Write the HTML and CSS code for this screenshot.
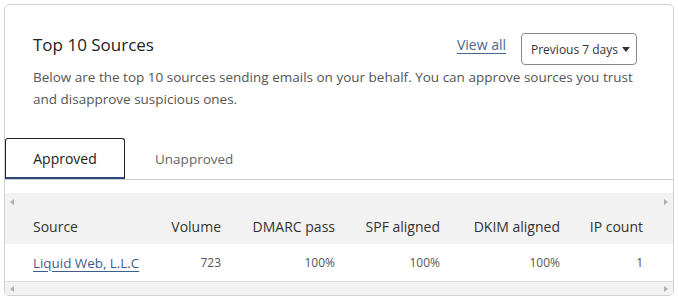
FILE: index.html
```html
<!DOCTYPE html>
<html lang="en">
<head>
    <meta charset="utf-8">
    <title>Top 10 Sources</title>
    <link rel="stylesheet" href="styles.css">
</head>
<body>
    <div class="card">
        <div class="card-head">
            <div class="head-row">
                <h2 class="title">Top 10 Sources</h2>
                <div class="head-actions">
                    <a href="#" class="view-all">View all</a>
                    <button type="button" class="period">Previous 7 days
                        <svg class="caret" width="8" height="5" viewBox="0 0 8 5"><path d="M0 0h8L4 5z" fill="#333"/></svg>
                    </button>
                </div>
            </div>
            <p class="desc">Below are the top 10 sources sending emails on your behalf. You can approve sources you trust and disapprove suspicious ones.</p>
        </div>

        <ul class="tabs">
            <li class="on">Approved</li>
            <li>Unapproved</li>
        </ul>

        <div class="table-wrap">
            <div class="scroll-bar"><span class="arr arr-l"></span><span class="arr arr-r"></span></div>
            <table class="src-table">
                <colgroup>
                    <col class="c-source">
                    <col class="c-volume">
                    <col class="c-dmarc">
                    <col class="c-spf">
                    <col class="c-dkim">
                    <col class="c-ip">
                    <col>
                </colgroup>
                <thead>
                    <tr>
                        <th class="left">Source</th>
                        <th>Volume</th>
                        <th>DMARC pass</th>
                        <th>SPF aligned</th>
                        <th>DKIM aligned</th>
                        <th>IP count</th>
                        <th></th>
                    </tr>
                </thead>
                <tbody>
                    <tr>
                        <td class="left"><a href="#" class="src-link">Liquid Web, L.L.C</a></td>
                        <td>723</td>
                        <td>100%</td>
                        <td>100%</td>
                        <td>100%</td>
                        <td>1</td>
                        <td></td>
                    </tr>
                </tbody>
            </table>
            <div class="scroll-bar bottom"><span class="arr arr-l"></span><span class="arr arr-r"></span></div>
        </div>
    </div>
</body>
</html>
```

FILE: styles.css
```css
@charset 'utf-8';
html,body,p,h1,h2,h3,ul,li,table,th,td,button { margin:0; padding:0; }
body { background-color:#fff; padding:4px; font-family:'Open Sans', 'Noto Sans', sans-serif; color:#333; }
ul, li { list-style:none; }
a { color:inherit; }
button { border:0; background:none; cursor:pointer; font-family:inherit; }

.card { width:670px; height:292px; box-sizing:border-box; border:1px solid #d2d2d2; border-radius:5px; overflow:hidden; }

.card-head { padding:28px 36px 0 28px; }
.head-row { display:flex; justify-content:space-between; align-items:flex-start; }
.title { font-size:17px; font-weight:400; line-height:24px; color:#222; }
.head-actions { display:flex; align-items:flex-start; gap:15px; }
.view-all { font-size:14px; line-height:24px; color:#4a6690; text-decoration:underline; text-underline-offset:3px; }
.period { display:flex; align-items:center; gap:4px; width:116px; height:32px; padding:0 0 0 9px; box-sizing:border-box; border:1px solid #8a8a8a; border-radius:4px; font-size:12px; color:#333; }
.caret { margin-top:1px; }
.desc { margin-top:1px; font-size:13.5px; line-height:22px; color:#555; }

.tabs { display:flex; margin-top:28px; border-bottom:1px solid #ccc; }
.tabs li { height:41px; padding:0 28px; display:flex; align-items:center; font-size:14px; color:#666; box-sizing:border-box; }
.tabs li.on { width:120px; justify-content:center; padding:0; border:1px solid #222; border-bottom:2px solid #2b4a7e; border-radius:3px 3px 0 0; margin-bottom:-1px; color:#222; }
.tabs li + li { padding-left:30px; font-size:13.5px; }

.table-wrap { margin-top:13px; background-color:#f2f2f2; }
.scroll-bar { position:relative; height:16px; }
.scroll-bar.bottom { height:13px; border-top:1px solid #ddd; }
.arr { position:absolute; top:6px; width:0; height:0; border-top:3px solid transparent; border-bottom:3px solid transparent; }
.scroll-bar.bottom .arr { top:4px; }
.arr-l { left:5px; border-right:4px solid #b0b0b0; }
.arr-r { right:5px; border-left:4px solid #b0b0b0; }

.src-table { width:100%; border-collapse:collapse; table-layout:fixed; }
.c-source { width:165px; }
.c-volume { width:65px; }
.c-dmarc { width:114px; }
.c-spf { width:105px; }
.c-dkim { width:120px; }
.c-ip { width:83px; }
.src-table th, .src-table td { padding:0 14px 0 0; text-align:right; white-space:nowrap; }
.src-table th { height:35px; font-size:14px; font-weight:400; color:#333; }
.src-table td { height:37px; font-size:12px; color:#555; background-color:#fff; }
.src-table .left { text-align:left; padding-left:28px; }
.src-link { font-size:13.4px; color:#3f5d8c; text-decoration:underline; text-underline-offset:3px; }
```
